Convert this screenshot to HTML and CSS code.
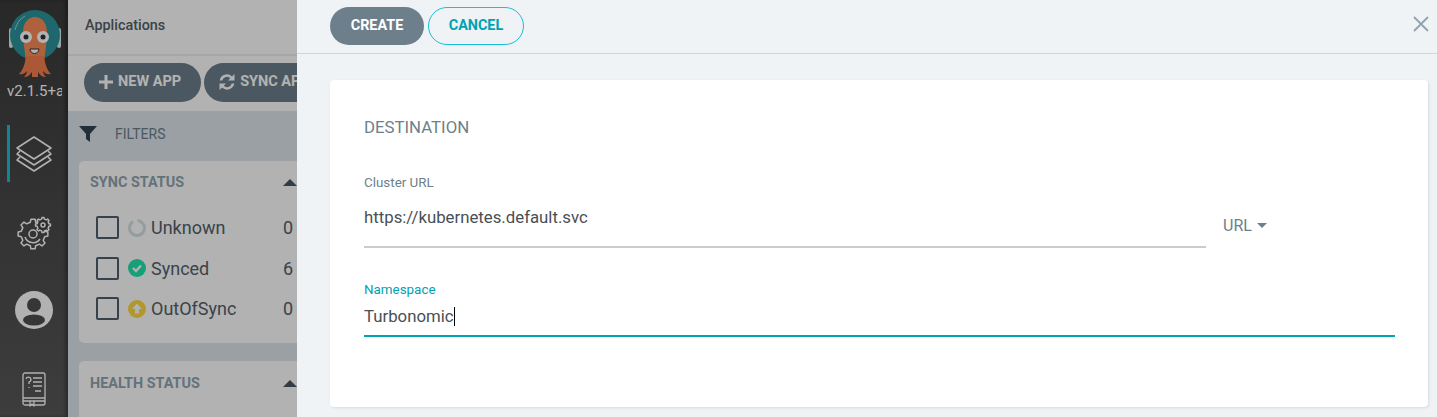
FILE: index.html
```html
<!DOCTYPE html>
<html lang="en">
<head>
	<meta charset="UTF-8">
	<title>Applications</title>
	<link rel="stylesheet" href="styles.css">
</head>
<body>
	<div class="page">
		<nav class="sidebar">
			<svg class="logo" viewBox="7 8 56 70" width="56" height="70">
				<rect x="9" y="28" width="4" height="20" rx="2" fill="#d8eef2"/>
				<rect x="57" y="28" width="4" height="20" rx="2" fill="#d8eef2"/>
				<circle cx="35" cy="35" r="25" fill="#2b969d"/>
				<path d="M15 30a21 21 0 0 1 10-14" fill="none" stroke="#9fd6d8" stroke-width="1"/>
				<path d="M23 32C23 12 47 12 47 32C47 42 45 52 44 62L26 62C25 52 23 42 23 32Z" fill="#fb8a58"/>
				<path d="M26 56C25 64 23 70 19 74C23 75 25 73 27 71C27 73 26 75 24 77C28 77 30 75 32 72L32 77L38 77L38 72C40 75 42 77 46 77C44 75 43 73 43 71C45 73 47 75 51 74C47 70 45 64 44 56Z" fill="#f47f4c"/>
				<circle cx="26" cy="37" r="6" fill="#fff"/>
				<circle cx="43" cy="37" r="6" fill="#fff"/>
				<circle cx="26" cy="37" r="2.500" fill="#333"/>
				<circle cx="43" cy="37" r="2.500" fill="#333"/>
				<path d="M30 49a4.500 4.500 0 0 0 9 0Z" fill="#fff" stroke="#333" stroke-width="1"/>
			</svg>
			<div class="version">v2.1.5+a</div>
			<div class="nav-item nav-item--active">
				<svg viewBox="17 135 34 36" width="34" height="36" class="nav-icon">
					<path d="M34 136L51 147L34 158L17 147Z"/>
					<path d="M20 150L17 153L34 164L51 153L48 150"/>
					<path d="M20 156L17 159L34 170L51 159L48 156"/>
				</svg>
			</div>
			<div class="nav-item">
				<svg viewBox="17 216 34 34" width="34" height="34" class="nav-icon">
					<defs>
						<path id="gear" d="M11.690-2.700L14.850-2.090L14.850 2.090L11.690 2.700L10.180 6.360L11.980 9.030L9.030 11.980L6.360 10.180L2.700 11.690L2.090 14.850L-2.090 14.850L-2.700 11.690L-6.360 10.180L-9.030 11.980L-11.980 9.030L-10.180 6.360L-11.690 2.700L-14.850 2.090L-14.850-2.090L-11.690-2.700L-10.180-6.360L-11.980-9.030L-9.030-11.980L-6.360-10.180L-2.700-11.690L-2.090-14.850L2.090-14.850L2.700-11.690L6.360-10.180L9.030-11.980L11.980-9.030L10.180-6.360Z"/>
					</defs>
					<use href="#gear" transform="translate(33 233)"/>
					<circle cx="33" cy="233" r="4"/>
					<path d="M25 236a8.500 8.500 0 0 0 15 2"/>
					<use href="#gear" transform="translate(43 224) scale(.5)" class="gear-small"/>
					<circle cx="43" cy="224" r="2"/>
				</svg>
			</div>
			<div class="nav-item nav-item--user">
				<svg viewBox="0 0 38 38" width="38" height="38">
					<circle cx="19" cy="19" r="19" fill="#fff"/>
					<circle cx="19" cy="14" r="7" fill="#4e4e4e"/>
					<ellipse cx="19" cy="29" rx="11" ry="5.500" fill="#4e4e4e"/>
				</svg>
			</div>
			<div class="nav-item nav-item--last">
				<svg viewBox="0 0 24 34" width="24" height="34" class="nav-icon nav-icon--thin">
					<rect x="1" y="1" width="22" height="32" rx="2"/>
					<path d="M1 26h22M1 29h22M8 29v5l2-2 2 2v-5"/>
					<path d="M4 7a2.500 2.500 0 1 1 3 3v2M7 15v1"/>
					<path d="M11 6h9M11 10h9M11 14h9M13 19h6"/>
				</svg>
			</div>
		</nav>

		<main class="content">
			<header class="top-bar">Applications</header>
			<div class="toolbar">
				<button class="tool-btn">
					<svg viewBox="0 0 14 14" width="14" height="14"><path d="M7 0v14M0 7h14" stroke="#fff" stroke-width="3" fill="none"/></svg>
					NEW APP
				</button>
				<button class="tool-btn">
					<svg viewBox="0 0 16 16" width="16" height="16"><path d="M15.500 0v6.500H9l2.300-2.300A4.800 4.800 0 0 0 3.300 6.500H.700a7.300 7.300 0 0 1 12.300-4Z M.500 16V9.500H7l-2.300 2.300a4.800 4.800 0 0 0 8-2.300h2.600a7.300 7.300 0 0 1-12.300 4Z" fill="#fff"/></svg>
					SYNC APPS
				</button>
			</div>
			<div class="filters">
				<div class="filters-title">
					<svg viewBox="0 0 18 18" width="18" height="18"><path d="M0 1h18L11 9v8l-4-3V9Z" fill="#2f4454"/></svg>
					<span>FILTERS</span>
				</div>
				<section class="filter-card">
					<h4 class="filter-head">SYNC STATUS <i class="caret"></i></h4>
					<div class="filter-row">
						<span class="check"></span>
						<svg viewBox="0 0 18 18" width="18" height="18" class="status"><circle cx="9" cy="9" r="7.500" fill="none" stroke="#d5e0e6" stroke-width="3" stroke-dasharray="42 5" transform="rotate(-85 9 9)"/></svg>
						<span class="filter-name">Unknown</span><span class="filter-count">0</span>
					</div>
					<div class="filter-row">
						<span class="check"></span>
						<svg viewBox="0 0 18 18" width="18" height="18" class="status"><circle cx="9" cy="9" r="9" fill="#22e4ab"/><path d="M5 9l3 3 5-5.500" stroke="#fff" stroke-width="2.400" fill="none"/></svg>
						<span class="filter-name">Synced</span><span class="filter-count">6</span>
					</div>
					<div class="filter-row">
						<span class="check"></span>
						<svg viewBox="0 0 18 18" width="18" height="18" class="status"><circle cx="9" cy="9" r="9" fill="#ffd93f"/><path d="M9 3.500l5 5.500h-3v4.500H7V9H4Z" fill="#fff"/></svg>
						<span class="filter-name">OutOfSync</span><span class="filter-count">0</span>
					</div>
				</section>
				<section class="filter-card filter-card--last">
					<h4 class="filter-head">HEALTH STATUS <i class="caret"></i></h4>
				</section>
			</div>
		</main>
	</div>

	<div class="overlay"></div>

	<aside class="panel">
		<div class="panel-head">
			<button class="btn btn--primary">CREATE</button>
			<button class="btn btn--outline">CANCEL</button>
			<svg class="panel-close" viewBox="0 0 16 16" width="16" height="16"><path d="M1 1l14 14M15 1L1 15" stroke="#8fa4b1" stroke-width="1.800" fill="none"/></svg>
		</div>
		<div class="panel-body">
			<div class="card">
				<p class="card-title">DESTINATION</p>
				<div class="cluster-row">
					<div class="field field--grow">
						<label class="field-label">Cluster URL</label>
						<div class="field-value">https://kubernetes.default.svc</div>
					</div>
					<div class="url-switch">URL <i class="caret-down"></i></div>
				</div>
				<div class="field field--active">
					<label class="field-label">Namespace</label>
					<div class="field-value">Turbonomic<span class="cursor"></span></div>
				</div>
			</div>
		</div>
	</aside>
</body>
</html>
```

FILE: styles.css
```css
* {
	margin: 0;
	padding: 0;
	box-sizing: border-box;
}
html, body {
	height: 100%;
	overflow: hidden;
}
body {
	font-family: Roboto, "Liberation Sans", sans-serif;
	background-color: #dee6eb;
	color: #555f6b;
}
button {
	font-family: inherit;
	border: none;
	outline: none;
}
.page {
	display: flex;
	height: 417px;
	overflow: hidden;
}

/* left nav */
.sidebar {
	width: 68px;
	flex-shrink: 0;
	display: flex;
	flex-direction: column;
	align-items: center;
	gap: 23px;
	overflow: hidden;
	padding-top: 8px;
	background: linear-gradient(#3a3a3a, #585858);
	box-shadow: inset -3px 0 3px rgba(0, 0, 0, .25);
}
.logo {
	margin: 0 0 -19px 2px;
	flex-shrink: 0;
}
.version {
	width: 55px;
	margin-left: 1px;
	margin-bottom: 2px;
	overflow: hidden;
	white-space: nowrap;
	font-size: 15px;
	line-height: 18px;
	color: #fff;
}
.nav-item {
	position: relative;
	width: 68px;
	height: 57px;
	flex-shrink: 0;
	display: flex;
	align-items: center;
	justify-content: center;
}
.nav-item--active::before {
	content: "";
	position: absolute;
	left: 7px;
	top: 0;
	width: 3px;
	height: 57px;
	background-color: #18bfd6;
}
.nav-item--user svg {
	margin-bottom: 8px;
}
.nav-item--last {
	height: 48px;
}
.nav-icon {
	fill: none;
	stroke: #fff;
	stroke-width: 1.500;
	stroke-linejoin: round;
	overflow: visible;
}
.nav-icon--thin {
	stroke-width: 1.300;
}
.gear-small {
	fill: #434343;
	stroke-width: 3;
}

/* applications list behind the panel */
.content {
	flex: 1;
	min-width: 0;
	overflow: hidden;
}
.top-bar {
	height: 56px;
	padding: 0 17px;
	line-height: 51px;
	font-size: 14.400px;
	font-weight: 500;
	background-color: #fff;
	border-bottom: 2px solid #f0f0f0;
}
.toolbar {
	display: flex;
	gap: 3px;
	height: 55px;
	padding: 7px 16px 0;
	background-color: #fff;
}
.tool-btn {
	display: flex;
	align-items: center;
	gap: 5px;
	flex-shrink: 0;
	height: 39px;
	padding: 0 20px 2px 15px;
	border-radius: 20px;
	background-color: #6d7f8b;
	color: #fff;
	font-size: 14.500px;
	font-weight: 700;
	white-space: nowrap;
}
.filters {
	padding: 0 11px;
}
.filters-title {
	display: flex;
	align-items: center;
	gap: 18px;
	height: 46px;
	margin-bottom: 4px;
	font-size: 14px;
	color: #6d7f8b;
}
.filter-card {
	width: 300px;
	height: 182px;
	margin-bottom: 18px;
	padding: 0 11px;
	border-radius: 5px;
	background-color: #fff;
}
.filter-card--last {
	height: 56px;
	margin-bottom: 0;
	border-radius: 5px 5px 0 0;
}
.filter-card--last .filter-head {
	height: 44px;
}
.filter-head {
	display: flex;
	justify-content: space-between;
	align-items: center;
	height: 42px;
	font-size: 14.400px;
	font-weight: 700;
	color: #8fa4b1;
}
.caret {
	width: 0;
	height: 0;
	margin-right: 71px;
	border-left: 7px solid transparent;
	border-right: 7px solid transparent;
	border-bottom: 7px solid #495763;
}
.filter-row {
	display: flex;
	align-items: center;
	height: 40.600px;
	padding-left: 6px;
	font-size: 18px;
	position: relative;
	top: 4.400px;
}
.check {
	width: 23px;
	height: 23px;
	border: 2px solid #4d5e6e;
	border-radius: 2px;
	margin-right: 9px;
}
.status {
	margin-right: 5px;
}
.filter-name {
	width: 132px;
}

/* dimmed backdrop */
.overlay {
	position: absolute;
	inset: 0;
	background-color: rgba(0, 0, 0, .3);
}

/* slide out panel */
.panel {
	position: absolute;
	top: 0;
	right: 0;
	bottom: 0;
	left: 297px;
	background-color: #eff3f6;
	color: #6d7f8b;
}
.panel-head {
	position: relative;
	display: flex;
	gap: 4px;
	height: 54px;
	padding: 7px 33px 0;
	border-bottom: 1px solid #ccd6dd;
}
.btn {
	height: 38px;
	padding-bottom: 2px;
	border-radius: 19px;
	font-size: 14.400px;
	font-weight: 700;
}
.btn--primary {
	width: 94px;
	background-color: #6d7f8b;
	color: #fff;
}
.btn--outline {
	width: 96px;
	background-color: transparent;
	border: 1px solid #18bfd6;
	color: #00a2b3;
}
.panel-close {
	position: absolute;
	right: 8px;
	top: 16px;
}
.panel-body {
	padding: 26px 9px 0 33px;
}
.card {
	height: 327px;
	padding: 37px 33px 0 34px;
	border-radius: 4px;
	background-color: #fff;
	box-shadow: 1px 1px 3px rgba(0, 0, 0, .1);
}
.card-title {
	font-size: 16.800px;
	line-height: 20px;
	margin-bottom: 38px;
}
.cluster-row {
	display: flex;
	gap: 17px;
	margin-bottom: 34px;
}
.field--grow {
	flex: 1;
}
.url-switch {
	width: 172px;
	padding-top: 41px;
	font-size: 16px;
	line-height: 20px;
}
.caret-down {
	display: inline-block;
	width: 0;
	height: 0;
	margin: 0 0 3px 1px;
	border-left: 5.500px solid transparent;
	border-right: 5.500px solid transparent;
	border-top: 5.500px solid #6d7f8b;
}
.field-label {
	display: block;
	font-size: 13.400px;
	line-height: 15px;
}
.field-value {
	height: 58px;
	padding-top: 17px;
	font-size: 16.800px;
	line-height: 20px;
	color: #4a4f55;
	border-bottom: 2px solid #ccc;
}
.field--active .field-label {
	color: #00a2b3;
}
.field--active .field-value {
	height: 40px;
	padding-top: 9px;
	border-bottom-color: #00a2b3;
}
.cursor {
	display: inline-block;
	width: 1px;
	height: 19px;
	vertical-align: -4px;
	background-color: #000;
}
```
